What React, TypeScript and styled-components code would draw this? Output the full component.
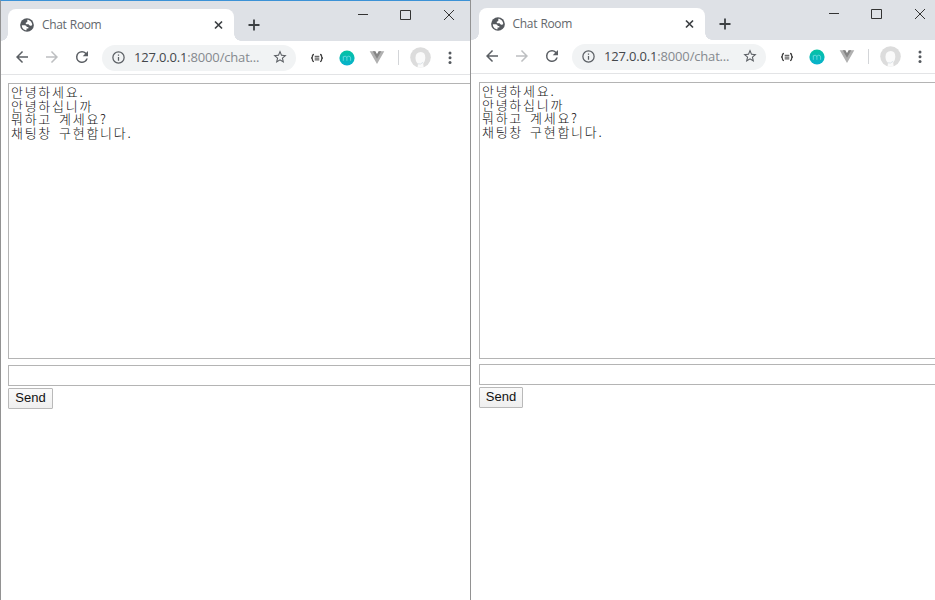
import React from "react";
import styled, { createGlobalStyle, css } from "styled-components";

const GlobalStyle = createGlobalStyle`
  * { box-sizing: border-box; }
  html, body { margin: 0; padding: 0; overflow: hidden; background: #fff; }
  svg { display: block; flex: none; }
`;

const Desktop = styled.div`
  display: grid;
  grid-template-columns: 470px 465px;
  width: 935px;
  height: 600px;
  overflow: hidden;
`;

const BrowserWindow = styled.section<{ $active: boolean }>`
  min-width: 0;
  height: 600px;
  overflow: hidden;
  background: #fff;
  border-left: 1px solid #929292;
  ${(p) => p.$active && css`border-top: 1px solid #3c92d6;`}
`;

const TabStrip = styled.header<{ $active: boolean }>`
  display: flex;
  align-items: flex-end;
  width: 470px;
  height: 40px;
  padding-left: ${(p) => (p.$active ? 7 : 7.6)}px;
  background: #dee1e6;
`;

const Tab = styled.div`
  position: relative;
  display: flex;
  align-items: center;
  width: 226px;
  height: 32px;
  padding: 0 9px 0 11px;
  border-radius: 8px 8px 0 0;
  background: #fff;

  &::before,
  &::after {
    content: "";
    position: absolute;
    bottom: 0;
    width: 7px;
    height: 7px;
  }
  &::before {
    left: -7px;
    background: radial-gradient(circle at 0 0, transparent 6.5px, #fff 7px);
  }
  &::after {
    right: -7px;
    background: radial-gradient(circle at 100% 0, transparent 6.5px, #fff 7px);
  }
`;

const TabTitle = styled.span`
  flex: 1;
  margin-left: 7px;
  color: #63676c;
  font: 12px/16px "Open Sans", sans-serif;
  letter-spacing: -0.35px;
  word-spacing: 0.6px;
  white-space: nowrap;
`;

const NewTab = styled.div`
  display: flex;
  align-items: center;
  height: 32px;
  margin-left: 13px;
`;

const WindowControls = styled.div`
  display: flex;
  align-self: flex-start;
  align-items: center;
  gap: 31px;
  height: 28px;
  margin-left: 96px;
`;

const Toolbar = styled.div`
  display: flex;
  align-items: center;
  width: 474px;
  height: 34px;
  padding-left: 11.5px;
  border-bottom: 1px solid #e3e4e6;
`;

const NavButtons = styled.div`
  display: flex;
  gap: 12px;
  margin-top: -1px;
`;

const AddressBar = styled.div`
  display: flex;
  align-items: center;
  width: 194px;
  height: 26px;
  margin-left: 11.5px;
  padding: 0 8px 1px 9px;
  border-radius: 13px;
  background: #f1f3f4;
`;

const Url = styled.span`
  flex: 1;
  margin-left: 8px;
  color: #85898e;
  font: 13px/20px "Open Sans", sans-serif;
  letter-spacing: -0.17px;
  white-space: nowrap;
`;

const Host = styled.span`
  color: #44474b;
`;

const Extensions = styled.div`
  display: flex;
  align-items: center;
  gap: 14px;
  margin-left: 13px;
`;

const Divider = styled.div`
  width: 1px;
  height: 15px;
  margin: 0 10.5px 0 13px;
  background: #d3d5d8;
`;

const MenuDots = styled.div`
  margin-left: 11px;
`;

const Page = styled.main<{ $active: boolean }>`
  display: flex;
  flex-direction: column;
  align-items: flex-start;
  padding: 8px 0 0 ${(p) => (p.$active ? 7 : 8)}px;
`;

const ChatLog = styled.div<{ $active: boolean }>`
  width: 640px;
  height: ${(p) => (p.$active ? 276 : 277)}px;
  margin-bottom: ${(p) => (p.$active ? 6 : 5)}px;
  padding: 1px 2px;
  border: 1px solid #b4b4b4;
  color: #111;
  font: 300 13px/13.5px "Noto Sans CJK KR", sans-serif;
  letter-spacing: 1.72px;
  word-spacing: 2.4px;
  white-space: pre;
`;

const MessageField = styled.div`
  width: 640px;
  height: 21px;
  border: 1px solid #b4b4b4;
`;

const SendButton = styled.button<{ $active: boolean }>`
  width: ${(p) => (p.$active ? 45 : 44)}px;
  height: 21px;
  margin-top: 2px;
  padding: 0 0 1px;
  border: 1px solid #b9b9b9;
  border-radius: 1px;
  background: linear-gradient(#fafafa, #efefef);
  color: #111;
  font: 13px/16px "Liberation Sans", sans-serif;
`;

const messages = ["안녕하세요.", "안녕하십니까", "뭐하고 계세요?", "채팅창 구현합니다."];

type GlyphProps = { d: string; size?: number; color?: string };

const Glyph = ({ d, size = 18, color = "#5b5f64" }: GlyphProps) => (
  <svg width={size} height={size} viewBox="0 0 24 24" fill={color}>
    <path d={d} />
  </svg>
);

const glyphs = {
  back: "M20 11H7.83l5.59-5.59L12 4l-8 8 8 8 1.41-1.41L7.83 13H20v-2z",
  forward: "M12 4l-1.41 1.41L16.17 11H4v2h12.17l-5.58 5.59L12 20l8-8z",
  reload:
    "M17.65 6.35A7.96 7.96 0 0 0 12 4a8 8 0 1 0 7.73 10h-2.08A6 6 0 1 1 12 6c1.66 0 3.14.69 4.22 1.78L13 11h7V4z",
  info: "M11 17h2v-6h-2v6zm1-15a10 10 0 1 0 0 20 10 10 0 0 0 0-20zm0 18a8 8 0 1 1 0-16 8 8 0 0 1 0 16zM11 9h2V7h-2v2z",
  star: "M22 9.24l-7.19-.62L12 2 9.19 8.63 2 9.24l5.46 4.73L5.82 21 12 17.27 18.18 21l-1.63-7.03zM12 15.4l-3.76 2.27 1-4.28-3.32-2.88 4.38-.38L12 6.1l1.71 4.04 4.38.38-3.32 2.88 1 4.28z",
};

const GlobeIcon = () => (
  <svg width="16" height="16" viewBox="0 0 24 24">
    <circle cx="12" cy="12" r="10.3" fill="#55595e" />
    <path
      d="M12.5 4.2C16 4.3 19.8 7.5 19.8 12Q18.7 13.8 16.2 12.8Q14.7 12.4 14.5 10.8H11Q9.6 10.2 10.2 8.6L12.4 7.6ZM4.2 12.2H8.7Q11.5 12.5 11.7 15H14V17.2H11.3V19.8C7.2 19.7 4.2 16.2 4.2 12.2Z"
      fill="#fff"
    />
  </svg>
);

const Stroke = ({ d, size, width, color = "#3c4043" }: { d: string; size: number; width: number; color?: string }) => (
  <svg width={size} height={size} viewBox={`0 0 ${size} ${size}`} fill="none" stroke={color} strokeWidth={width}>
    <path d={d} />
  </svg>
);

const BracesIcon = () => (
  <svg width="16" height="16" viewBox="-1 0 16 16" fill="none" stroke="#414141" strokeWidth="1.3">
    <path d="M4 4.5Q2.4 4.5 2.4 6V7Q2.4 8 1 8Q2.4 8 2.4 9V10Q2.4 11.5 4 11.5M10 4.5Q11.6 4.5 11.6 6V7Q11.6 8 13 8Q11.6 8 11.6 9V10Q11.6 11.5 10 11.5" />
    <path strokeWidth="1" d="M4.7 6.3H9.3M4.7 8.1H9.3M4.7 9.9H9.3" />
  </svg>
);

const MomentumIcon = ({ id }: { id: string }) => (
  <svg width="16" height="16" viewBox="0 0 16 16">
    <defs>
      <linearGradient id={id} x1="0" y1="0" x2="0" y2="1">
        <stop offset="0" stopColor="#05c3a1" />
        <stop offset="1" stopColor="#08b0ce" />
      </linearGradient>
    </defs>
    <circle cx="8" cy="8" r="7.6" fill={`url(#${id})`} />
    <path d="M4.3 10.8V6.3M4.3 7.6Q4.6 6.2 6.1 6.2Q7.9 6.2 7.9 8V10.8M7.9 7.7Q8.2 6.2 9.7 6.2Q11.6 6.2 11.6 8V10.8" fill="none" stroke="#68dadc" strokeWidth=".9" />
  </svg>
);

const VueIcon = () => (
  <svg width="16" height="16" viewBox="0 0 16 16">
    <path d="M.7 1.3H6L8 4.7 10 1.3H15.3L8 14z" fill="#b0b0b0" />
    <path d="M3.8 1.3H6.4L8 4.2 9.6 1.3H12.2L8 8.8z" fill="#858585" />
  </svg>
);

const AvatarIcon = () => (
  <svg width="21" height="21" viewBox="0 0 21 21">
    <circle cx="10.5" cy="10.5" r="10.3" fill="#dcdcdc" />
    <path d="M7.5 20.8L8 16.7Q5.4 14.8 5.5 10.5Q5.7 5.2 10.8 5.1Q15.5 5.3 15.3 11Q15.2 14.5 13.2 16.7L13.7 20.8z" fill="#fafafa" />
    <path d="M8 16.8Q10.4 18 13.1 15.3" fill="none" stroke="#dce3e8" />
  </svg>
);

const DotsIcon = () => (
  <svg width="16" height="16" viewBox="0 0 16 16" fill="#55595e">
    <circle cx="8" cy="3" r="1.5" />
    <circle cx="8" cy="7.7" r="1.5" />
    <circle cx="8" cy="12.4" r="1.5" />
  </svg>
);

function ChatWindow({ id, active = false }: { id: string; active?: boolean }) {
  return (
    <BrowserWindow $active={active}>
      <TabStrip $active={active}>
        <Tab>
          <GlobeIcon />
          <TabTitle>Chat Room</TabTitle>
          <Stroke size={13} width={1.7} d="M3 2.5L10 9.5M10 2.5L3 9.5" />
        </Tab>
        <NewTab>
          <Stroke size={14} width={1.8} d="M7 1.5V12.5M1.5 7H12.5" />
        </NewTab>
        <WindowControls>
          <Stroke size={12} width={1} color="#333" d="M1 5.5H11" />
          <Stroke size={12} width={1} color="#333" d="M.5 1.5H10.5V10.5H.5Z" />
          <Stroke size={12} width={1} color="#333" d="M1 1L11 11M11 1L1 11" />
        </WindowControls>
      </TabStrip>
      <Toolbar>
        <NavButtons>
          <Glyph d={glyphs.back} />
          <Glyph d={glyphs.forward} color="#bdbfc1" />
          <Glyph d={glyphs.reload} />
        </NavButtons>
        <AddressBar>
          <Glyph d={glyphs.info} size={15} />
          <Url>
            <Host>127.0.0.1</Host>:8000/chat...
          </Url>
          <Glyph d={glyphs.star} size={16} />
        </AddressBar>
        <Extensions>
          <BracesIcon />
          <MomentumIcon id={id} />
          <VueIcon />
        </Extensions>
        <Divider />
        <AvatarIcon />
        <MenuDots>
          <DotsIcon />
        </MenuDots>
      </Toolbar>
      <Page $active={active}>
        <ChatLog $active={active}>{messages.join("\n")}</ChatLog>
        <MessageField />
        <SendButton $active={active}>Send</SendButton>
      </Page>
    </BrowserWindow>
  );
}

export default function App() {
  return (
    <>
      <GlobalStyle />
      <Desktop>
        <ChatWindow id="leftBadge" active />
        <ChatWindow id="rightBadge" />
      </Desktop>
    </>
  );
}
